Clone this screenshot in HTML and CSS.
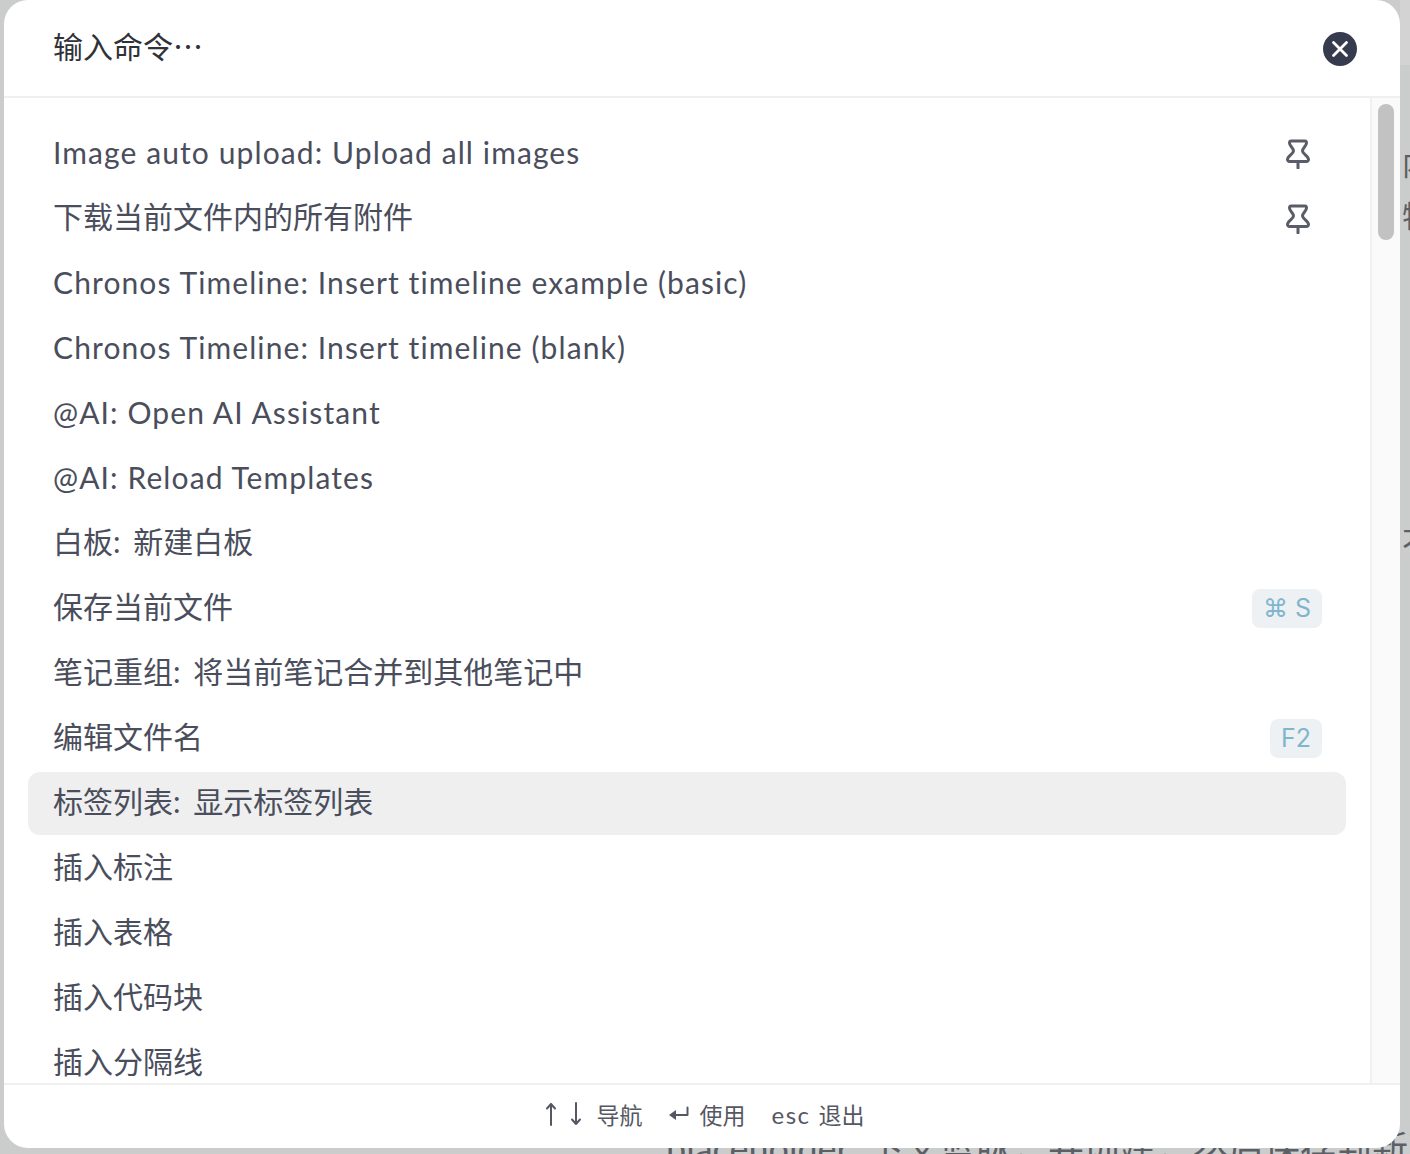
FILE: index.html
```html
<!DOCTYPE html>
<html lang="zh">

<head>
    <meta charset="UTF-8">
    <title>命令面板</title>
    <link rel="stylesheet" href="styles.css">
</head>

<body>
    <div class="behind-bar"></div>
    <div class="behind behind-a">内</div>
    <div class="behind behind-b">特</div>
    <div class="behind behind-c">不</div>
    <div class="behind behind-d">placeholder: 下文蓝脉，并创建，然后保存到新建</div>

    <div class="modal">
        <div class="search">
            <div class="search-input">输入命令⋯</div>
            <div class="close-btn">
                <svg width="18" height="18" viewBox="0 0 18 18">
                    <path d="M2.500 2.500L15.500 15.500M15.500 2.500L2.500 15.500" stroke="#fff" stroke-width="2.800" stroke-linecap="round" />
                </svg>
            </div>
        </div>

        <div class="results">
            <div class="list">
                <div class="row latin">
                    <span>Image auto upload: Upload all images</span>
                    <svg class="pin" width="24" height="30" viewBox="0 0 24 30">
                        <path d="M5 2H19C20 2 20.500 3 20.500 4C20.500 7 16.500 9 16.500 12C16.500 15 22.500 17 22.500 20.500C22.500 21.500 21.500 22.500 20.500 22.500H3.500C2.500 22.500 1.500 21.500 1.500 20.500C1.500 17 7.500 15 7.500 12C7.500 9 3.500 7 3.500 4C3.500 3 4 2 5 2ZM12 22.500V29" />
                    </svg>
                </div>
                <div class="row">
                    <span>下载当前文件内的所有附件</span>
                    <svg class="pin" width="24" height="30" viewBox="0 0 24 30">
                        <path d="M5 2H19C20 2 20.500 3 20.500 4C20.500 7 16.500 9 16.500 12C16.500 15 22.500 17 22.500 20.500C22.500 21.500 21.500 22.500 20.500 22.500H3.500C2.500 22.500 1.500 21.500 1.500 20.500C1.500 17 7.500 15 7.500 12C7.500 9 3.500 7 3.500 4C3.500 3 4 2 5 2ZM12 22.500V29" />
                    </svg>
                </div>
                <div class="row latin"><span>Chronos Timeline: Insert timeline example (basic)</span></div>
                <div class="row latin"><span>Chronos Timeline: Insert timeline (blank)</span></div>
                <div class="row latin"><span>@AI: Open AI Assistant</span></div>
                <div class="row latin"><span>@AI: Reload Templates</span></div>
                <div class="row"><span>白板: 新建白板</span></div>
                <div class="row"><span>保存当前文件</span><kbd class="key">⌘ S</kbd></div>
                <div class="row"><span>笔记重组: 将当前笔记合并到其他笔记中</span></div>
                <div class="row"><span>编辑文件名</span><kbd class="key">F2</kbd></div>
                <div class="row selected"><span>标签列表: 显示标签列表</span></div>
                <div class="row"><span>插入标注</span></div>
                <div class="row"><span>插入表格</span></div>
                <div class="row"><span>插入代码块</span></div>
                <div class="row"><span>插入分隔线</span></div>
            </div>
            <div class="scrollbar">
                <div class="thumb"></div>
            </div>
        </div>

        <div class="footer">
            <div class="hint">
                <svg width="12" height="24" viewBox="0 0 12 24">
                    <path d="M6 23V2M2 6.500L6 2L10 6.500" />
                </svg>
                <svg class="arrow-down" width="12" height="24" viewBox="0 0 12 24">
                    <path d="M6 1V22M2 17.500L6 22L10 17.500" />
                </svg>
                <span>导航</span>
            </div>
            <div class="hint">
                <svg width="21" height="16" viewBox="0 0 21 16">
                    <path d="M19.500 1.500V9H6" />
                    <path class="head" d="M1 9L8 4V14Z" />
                </svg>
                <span>使用</span>
            </div>
            <div class="hint hint-esc"><span class="esc">esc</span><span>退出</span></div>
        </div>
    </div>
</body>

</html>
```

FILE: styles.css
```css
html,
body {
    height: 100%;
}

body {
    margin: 0;
    height: 1154px;
    overflow: hidden;
    background-color: #cbcdcc;
    font-family: "Lato", "Noto Sans CJK SC", sans-serif;
    color: #4a4e5c;
    padding: 0 10px 6px 4px;
    box-sizing: border-box;
}

/* page under the dialog */
.behind-bar {
    position: absolute;
    top: 0;
    right: 0;
    width: 10px;
    height: 65px;
    background-color: #d2d3d2;
}

.behind {
    position: absolute;
    font-size: 30px;
    line-height: 30px;
    color: #5c5f66;
    white-space: nowrap;
}

.behind-a {
    left: 1402px;
    top: 148px;
}

.behind-b {
    left: 1402px;
    top: 200px;
}

.behind-c {
    left: 1402px;
    top: 526px;
}

.behind-d {
    left: 666px;
    top: 1130px;
    font-size: 36px;
    line-height: 36px;
}

.modal {
    position: relative;
    display: flex;
    flex-direction: column;
    height: 100%;
    background-color: #fff;
    border-radius: 24px;
}

.search {
    display: flex;
    align-items: center;
    justify-content: space-between;
    height: 96px;
    flex-shrink: 0;
    padding: 0 43px 0 49px;
    border-bottom: 2px solid #f0f0f0;
}

.search-input {
    font-size: 30px;
    color: #2f3238;
    margin-top: -6px;
}

.close-btn {
    display: flex;
    align-items: center;
    justify-content: center;
    width: 34px;
    height: 34px;
    margin-top: 2px;
    border-radius: 50%;
    background-color: #363b4e;
}

.results {
    display: flex;
    flex: 1;
    min-height: 0;
}

.list {
    flex: 1;
    min-width: 0;
    overflow: hidden;
    padding: 24px 24px 0;
    display: flex;
    flex-direction: column;
    gap: 2px;
}

.row {
    display: flex;
    align-items: center;
    justify-content: space-between;
    flex-shrink: 0;
    height: 63px;
    padding: 0 24px 0 25px;
    border-radius: 12px;
    font-size: 30px;
    word-spacing: 5px;
    white-space: nowrap;
}

.row > span {
    margin-bottom: 7px;
}

.row.latin {
    letter-spacing: 1.100px;
    word-spacing: 0;
}

.row.latin > span {
    margin-bottom: 4px;
}

.row.selected {
    background-color: #efefef;
}

.pin {
    margin-right: 12px;
    fill: none;
    stroke: #5a5d68;
    stroke-width: 3;
    stroke-linejoin: round;
    stroke-linecap: round;
}

.key {
    padding: 0 11px;
    height: 39px;
    line-height: 39px;
    border-radius: 8px;
    background-color: #eef1f4;
    color: #7fb6cc;
    font-family: "Inter", sans-serif;
    font-size: 25px;
    letter-spacing: 0;
    word-spacing: 0;
}

.scrollbar {
    width: 30px;
    flex-shrink: 0;
    padding: 6px 6px 0;
    box-sizing: border-box;
    background-color: #fafafa;
    border-left: 2px solid #f0f0f0;
}

.thumb {
    width: 16px;
    height: 136px;
    border-radius: 8px;
    background-color: #c2c2c2;
}

.footer {
    display: flex;
    align-items: center;
    justify-content: center;
    gap: 26px;
    height: 65px;
    flex-shrink: 0;
    border-top: 2px solid #f0f0f0;
    font-size: 23px;
    color: #555862;
    padding-left: 6px;
    padding-bottom: 5px;
    box-sizing: border-box;
}

.hint {
    display: flex;
    align-items: center;
    gap: 10px;
}

.hint-esc {
    gap: 8px;
}

.hint svg {
    fill: none;
    stroke: #555862;
    stroke-width: 2;
    stroke-linecap: round;
    stroke-linejoin: round;
}

.hint svg .head {
    fill: #555862;
    stroke: none;
}

.arrow-down {
    margin-left: 3px;
    margin-right: 4px;
}

.esc {
    font-size: 24px;
    letter-spacing: 1.500px;
}
```
